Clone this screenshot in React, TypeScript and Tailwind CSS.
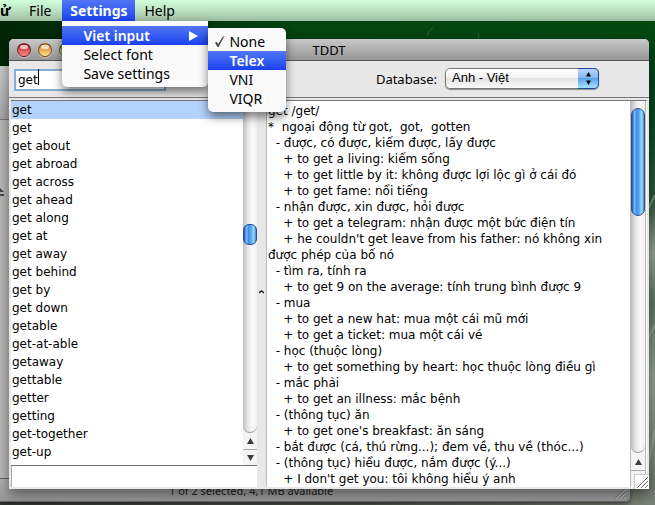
import { useState } from "react";
import type { ReactNode } from "react";

const words = [
  "get", "get", "get about", "get abroad", "get across", "get ahead", "get along", "get at", "get away",
  "get behind", "get by", "get down", "getable", "get-at-able", "getaway", "gettable", "getter", "getting",
  "get-together", "get-up",
];

const definition = [
  "get /get/",
  "*  ngoại động từ got,  got,  gotten",
  "  - được, có được, kiếm được, lấy được",
  "    + to get a living: kiếm sống",
  "    + to get little by it: không được lợi lộc gì ở cái đó",
  "    + to get fame: nổi tiếng",
  "  - nhận được, xin được, hỏi được",
  "    + to get a telegram: nhận được một bức điện tín",
  "    + he couldn't get leave from his father: nó không xin\nđược phép của bố nó",
  "  - tìm ra, tính ra",
  "    + to get 9 on the average: tính trung bình được 9",
  "  - mua",
  "    + to get a new hat: mua một cái mũ mới",
  "    + to get a ticket: mua một cái vé",
  "  - học (thuộc lòng)",
  "    + to get something by heart: học thuộc lòng điều gì",
  "  - mắc phải",
  "    + to get an illness: mắc bệnh",
  "  - (thông tục) ăn",
  "    + to get one's breakfast: ăn sáng",
  "  - bắt được (cá, thú rừng...); đem về, thu về (thóc...)",
  "  - (thông tục) hiểu được, nắm được (ý...)",
  "    + I don't get you: tôi không hiểu ý anh",
];

const aqua =
  "bg-[linear-gradient(90deg,#1459c4_0%,#86b9f5_22%,#3f8ee8_38%,#5aa9f6_60%,#9adcff_82%,#4a7fb5_100%)]";
const track = "bg-[linear-gradient(90deg,#bdbdbd_0%,#e2e2e2_30%,#fafafa_65%,#f0f0f0_100%)]";
const highlight = "bg-linear-to-b from-[#5275f5] to-[#1a3fee] text-white";

function Grip() {
  return (
    <svg width="12" height="12" viewBox="0 0 12 12" aria-hidden="true">
      <path d="M1 12 12 1M5 12l7-7M9 12l3-3" stroke="#6b6b6b" fill="none" />
      <path d="M2 12 12 2M6 12l6-6M10 12l2-2" stroke="#ffffff" strokeOpacity=".6" fill="none" />
    </svg>
  );
}

function Triangle({ down = false }: { down?: boolean }) {
  return (
    <svg width="7" height="6" viewBox="0 0 7 6" aria-hidden="true">
      <path d={down ? "M0 0h7L3.500 6z" : "M0 6h7L3.500 0z"} fill="#3c3c3c" />
    </svg>
  );
}

function Backdrop() {
  return (
    <svg className="absolute inset-0 size-full" viewBox="0 0 655 505" preserveAspectRatio="none" aria-hidden="true">
      <defs>
        <linearGradient id="leaf" x1="0" y1="0" x2="0" y2="1">
          <stop offset="0" stopColor="#02390f" />
          <stop offset=".25" stopColor="#0b4a22" />
          <stop offset=".4" stopColor="#35593f" />
          <stop offset=".5" stopColor="#9aa89c" />
          <stop offset=".6" stopColor="#5d7a64" />
          <stop offset=".75" stopColor="#9aa79a" />
          <stop offset="1" stopColor="#6a756a" />
        </linearGradient>
        <linearGradient id="top" x1="0" y1="0" x2="1" y2="0">
          <stop offset="0" stopColor="#002606" />
          <stop offset=".45" stopColor="#044312" />
          <stop offset="1" stopColor="#034813" />
        </linearGradient>
        <linearGradient id="floor" x1="0" y1="0" x2="1" y2="0">
          <stop offset="0" stopColor="#3e403c" />
          <stop offset=".5" stopColor="#51544c" />
          <stop offset="1" stopColor="#7a8176" />
        </linearGradient>
      </defs>
      <rect width="655" height="505" fill="url(#leaf)" />
      <rect width="655" height="70" fill="url(#top)" />
      <rect y="490" width="655" height="15" fill="url(#floor)" />
      <path d="M645 215 655 195M645 345 655 325M645 480 655 430" stroke="#a9b5aa" strokeWidth="2" opacity=".6" />
      <path d="M427 36q1-5 6-8M479 38l-1-5" stroke="#3a6b4a" fill="none" opacity=".7" />
    </svg>
  );
}

function TrafficLight({ label, tone }: { label: string; tone: string }) {
  return (
    <button
      aria-label={label}
      className={`flex size-[14px] justify-center rounded-full border border-black/50 pt-px shadow-[0_1px_0_rgba(255,255,255,.5)] ${tone}`}
    >
      <span className="h-1 w-2 rounded-full bg-white/70" />
    </button>
  );
}

function MenuItem({ active = false, checked = false, children }: {
  active?: boolean; checked?: boolean; children: ReactNode;
}) {
  return (
    <button
      role="menuitem"
      className={`relative flex h-[19px] w-full items-center justify-between pl-[21px] pr-[10px] text-left leading-[19px] ${active ? `font-semibold ${highlight}` : ""}`}
    >
      {checked && (
        <svg className="absolute left-[6px] top-1" width="11" height="12" viewBox="0 0 11 12" aria-hidden="true">
          <path d="M1 6.500 2.800 5.800 4.200 8 8.500 1 10.500 0 4.600 11H3.400z" fill="#4d4d4d" />
        </svg>
      )}
      {children}
    </button>
  );
}

function MenuBar() {
  const panel = "absolute bg-[#fafafa] shadow-[0_5px_10px_rgba(0,0,0,.5)]";
  return (
    <nav
      aria-label="Menu bar"
      className="relative z-20 flex h-[21px] bg-linear-to-b from-[#d2ffdb] via-[#bbe2c1] to-[#9dbca2] text-[14px] leading-[21px]"
    >
      <button className="w-[20px] text-left font-bold">ử</button>
      <button className="px-[9px]">File</button>
      <div className="relative ml-[2px]">
        <button className={`h-[21px] w-[73px] font-bold ${highlight}`}>Settings</button>
        <div role="menu" className={`${panel} left-0 top-[21px] w-[146px] rounded-b-[5px] pb-1 pt-[5px]`}>
          <MenuItem active>
            Viet input
            <svg width="9" height="10" viewBox="0 0 9 10" aria-hidden="true">
              <path d="M0 0 9 5 0 10z" fill="#fff" />
            </svg>
          </MenuItem>
          <MenuItem>Select font</MenuItem>
          <MenuItem>Save settings</MenuItem>
        </div>
        <div role="menu" className={`${panel} left-[146px] top-7 w-[78px] rounded-[5px] rounded-tl-none py-1`}>
          <MenuItem checked>None</MenuItem>
          <MenuItem active>Telex</MenuItem>
          <MenuItem>VNI</MenuItem>
          <MenuItem>VIQR</MenuItem>
        </div>
      </div>
      <button className="px-[9px]">Help</button>
    </nav>
  );
}

function FinderWindow() {
  return (
    <div className="absolute bottom-[3px] left-0 right-[25px] top-[66px] flex flex-col rounded-br-[5px] bg-[#bcbcbc] shadow-[0_2px_5px_rgba(0,0,0,.5)]">
      <div className="h-[54px] border-b border-[#777] bg-linear-to-b from-[#d0d0d0] to-[#aaaaaa]" />
      <div className="flex-1 pt-[67px]">
        <svg width="4" height="10" viewBox="0 0 4 10" aria-hidden="true">
          <path d="M0 1 4 5H0zM0 7h4v2H0z" fill="#444" />
        </svg>
      </div>
      <div className="flex h-[24px] items-end justify-end rounded-br-[5px] border-b border-t border-[#666] bg-linear-to-b from-[#b4b4b4] to-[#989898] px-1 pb-[2px]">
        <p className="w-full pl-[165px] text-[11px] leading-[16px] text-[#222]">1 of 2 selected, 4,1 MB available</p>
        <Grip />
      </div>
    </div>
  );
}

function DictionaryWindow() {
  const [query, setQuery] = useState("get");
  return (
    <main className="absolute bottom-4 left-[9px] right-[6px] top-[39px] flex flex-col overflow-hidden rounded-t-[5px] bg-[#e8e8e8] shadow-[0_5px_14px_rgba(0,0,0,.5)]">
      <header className="flex h-[22px] shrink-0 items-center border-b border-[#555] bg-linear-to-b from-[#c9c9c9] to-[#969696] px-2">
        <div className="flex flex-1 gap-[7px]">
          <TrafficLight label="Close" tone="bg-linear-to-b from-[#b3141c] to-[#ff8a8a]" />
          <TrafficLight label="Minimize" tone="bg-linear-to-b from-[#d2781a] to-[#ffe28a]" />
          <TrafficLight label="Zoom" tone="bg-linear-to-b from-[#4c8a1d] to-[#c8f08a]" />
        </div>
        <h1 className="text-[13px] leading-5">TDDT</h1>
        <div className="flex-1" />
      </header>

      <div className="flex h-[37px] shrink-0 items-start justify-between border-b border-[#777] pl-[5px] pr-[50px] pt-[5px]">
        <div className="relative">
          <input
            aria-label="Search word"
            value={query}
            onChange={(e) => setQuery(e.target.value)}
            className="h-[22px] w-[152px] border-2 border-[#86acd4] bg-white px-[2px] font-['DejaVu_Sans',sans-serif] text-[12px] caret-transparent outline-none"
          />
          <span className="pointer-events-none absolute left-1 top-[3px] flex h-4 font-['DejaVu_Sans',sans-serif] text-[12px]" aria-hidden="true">
            <span className="invisible">{query}</span>
            <span className="w-px bg-black" />
          </span>
        </div>
        <div className="flex items-center gap-2 pt-[2px]">
          <label htmlFor="database" className="text-[13px] leading-5">Database:</label>
          <div className="relative">
            <select
              id="database"
              className="block h-[21px] w-[154px] appearance-none rounded-[5px] border border-[#777] bg-[linear-gradient(#fff,#f2f2f2_48%,#e4e4e4_50%,#fafafa)] pb-[2px] pl-[6px] font-['Liberation_Sans',sans-serif] text-[13px] leading-[17px] shadow-[0_1px_1px_rgba(0,0,0,.4)]"
            >
              <option>Anh - Việt</option>
            </select>
            <span className="pointer-events-none absolute inset-y-0 right-0 flex w-[21px] items-center justify-center rounded-r-[5px] border-y border-r border-[#24479b] bg-[linear-gradient(#b9d5f8,#82b6f3_48%,#5ba5ef_50%,#a5e0ff)]">
              <svg width="5" height="13" viewBox="0 0 5 13" aria-hidden="true">
                <path d="M0 4.500h5L2.500 0zM0 8.500h5L2.500 13z" fill="#000" />
              </svg>
            </span>
          </div>
        </div>
      </div>

      <div className="flex min-h-0 flex-1 px-[2px] pb-[2px] pt-[2px] font-['DejaVu_Sans',sans-serif] text-[12px]">
        <section className="flex w-[246px] shrink-0 flex-col border-t border-[#777]">
          <div className="flex min-h-0 flex-1 border-b border-[#777] bg-white">
            <ul className="flex-1 overflow-hidden">
              {words.map((word, i) => (
                <li key={i} className={`h-[18px] pl-px leading-[18px] ${i === 0 ? "bg-[#b3d3fd]" : ""}`}>
                  {word}
                </li>
              ))}
            </ul>
            <div className="flex w-[14px] flex-col bg-[#f4f4f4]" aria-hidden="true">
              <div className={`min-h-0 flex-1 rounded-b-full border-b border-[#999] pt-[123px] ${track}`}>
                <div className={`h-[21px] rounded-[6px] border border-[#2a4f8c] ${aqua}`} />
              </div>
              <div className="flex h-[16px] items-center justify-center"><Triangle /></div>
              <div className="flex h-[16px] items-center justify-center border-t border-[#aaa]"><Triangle down /></div>
            </div>
          </div>
          <input aria-label="Message" className="h-[21px] border-l border-[#aaa] bg-white px-1 outline-none" />
        </section>

        <div className="flex w-[10px] shrink-0 justify-center border-r border-[#bbb] pt-[190px]">
          <svg width="5" height="4" viewBox="0 0 5 4" aria-hidden="true">
            <path d="M0 3 2.500 1 5 3" fill="none" stroke="#222" strokeWidth="1.500" />
          </svg>
        </div>

        <section className="flex min-w-0 flex-1 border-t border-[#777] bg-white">
          <article className="min-w-0 flex-1 overflow-hidden whitespace-pre pl-px pt-[2px] leading-[16px]">
            {definition.map((line, i) => (
              <p key={i}>{line}</p>
            ))}
          </article>
          <div className="mr-px flex w-[16px] flex-col border-x border-[#bbb] bg-[#f4f4f4]" aria-hidden="true">
            <div className={`min-h-0 flex-1 rounded-b-full border-b border-[#999] pt-[7px] ${track}`}>
              <div className={`h-[108px] rounded-full border border-[#2a4f8c] ${aqua}`} />
            </div>
            <div className="flex h-[17px] items-center justify-center"><Triangle /></div>
            <div className="h-[17px] border-t border-[#aaa]" />
          </div>
        </section>
      </div>
      <div className="absolute bottom-0 right-0 border-l border-t border-[#ccc] bg-white p-px"><Grip /></div>
    </main>
  );
}

export default function App() {
  return (
    <div className="relative h-screen overflow-hidden bg-[#033b10] font-['Noto_Sans',sans-serif] text-black">
      <Backdrop />
      <FinderWindow />
      <DictionaryWindow />
      <MenuBar />
    </div>
  );
}
